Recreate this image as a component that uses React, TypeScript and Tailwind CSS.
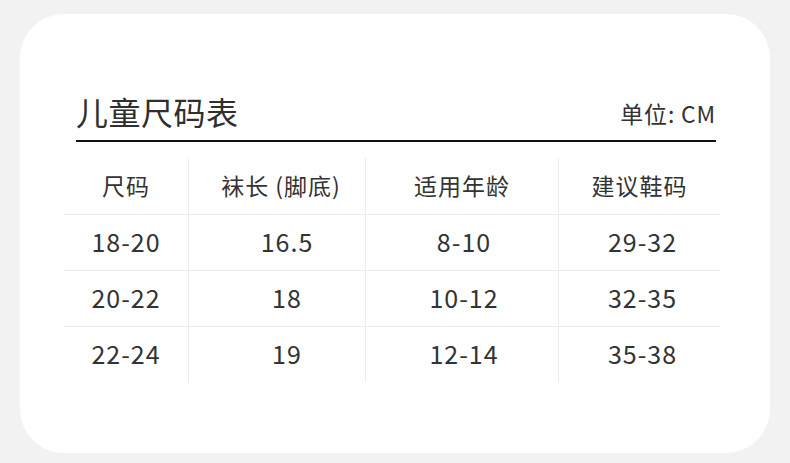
import React from "react";

const font = { fontFamily: '"Noto Sans CJK SC", "Noto Sans", sans-serif' };

const header = ["尺码", "袜长 (脚底)", "适用年龄", "建议鞋码"];
const rows = [
  ["18-20", "16.5", "8-10", "29-32"],
  ["20-22", "18", "10-12", "32-35"],
  ["22-24", "19", "12-14", "35-38"],
];

const cols = "grid grid-cols-[124px_177px_193px_162px]";

export default function App() {
  return (
    <div className="w-[790px] h-[463px] bg-[#f2f2f2] pt-[14px] pl-[20px]" style={font}>
      <div className="w-[750px] h-[439px] bg-white rounded-[44px] pt-[77px]">
        <div className="ml-[56px] w-[640px] flex items-center justify-between h-[40px] mb-[9px]">
          <span className="text-[32px] leading-[40px] text-[#2f2f2f] tracking-[0.5px]">儿童尺码表</span>
          <span className="text-[23px] leading-[28px] text-[#333333] pt-[4px] tracking-[0.8px]">单位: CM</span>
        </div>
        <div className="ml-[56px] w-[640px] h-[1.5px] bg-[#111111]" />
        <div className="ml-[44px] mt-[16px] w-[656px] text-[#333333]">
          <div className={cols + " h-[56px]"}>
            {header.map((h, i) => (
              <div
                key={i}
                className={
                  "flex items-center justify-center text-[23px] tracking-[1px] " +
                  (i > 0 ? "border-l border-[#ebebeb] " : "") +
                  (i === 1 ? "pl-[8px]" : "")
                }
              >
                {h}
              </div>
            ))}
          </div>
          {rows.map((r, ri) => (
            <div key={ri} className={cols + " h-[56px] border-t border-[#ebebeb]"}>
              {r.map((c, i) => (
                <div
                  key={i}
                  className={
                    "flex items-center justify-center text-[25px] tracking-[1px] " +
                    (i > 0 ? "border-l border-[#ebebeb] " : "") +
                    (i === 1 ? "pl-[20px] " : "") +
                    (i === 2 ? "pl-[4px] " : "") +
                    (i === 3 ? "pl-[6px]" : "")
                  }
                >
                  {c}
                </div>
              ))}
            </div>
          ))}
        </div>
      </div>
    </div>
  );
}
